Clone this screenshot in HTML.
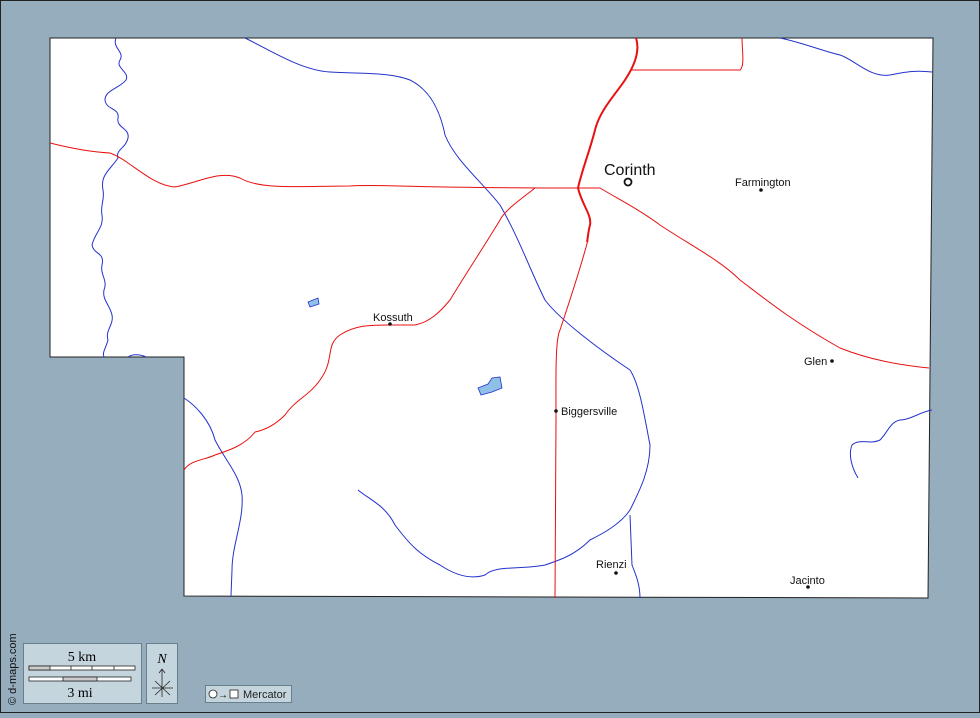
<!DOCTYPE html>
<html><head><style>
body{margin:0;width:980px;height:713px;overflow:hidden;background:#95adbd;font-family:"Liberation Sans",sans-serif}
</style></head><body>
<svg width="980" height="713" viewBox="0 0 980 713" xmlns="http://www.w3.org/2000/svg">
<rect x="0.5" y="0.5" width="979" height="712" fill="#95adbd" stroke="#222" stroke-width="1"/>
<polygon points="50,38 933,38 928,598 184,596 184,357 50,357" fill="#fff" stroke="#222" stroke-width="1"/>
<g fill="none" stroke="#2233cc" stroke-width="1">
<path d="M116,38 C112,48 125,52 120,60 C115,68 130,72 126,80 C120,88 105,90 105,100 C106,110 120,108 118,118 C116,128 130,128 128,138 C126,148 115,150 118,158 C110,170 100,175 103,190 C105,200 100,205 102,215 C104,228 95,232 92,245 C94,255 105,252 102,265 C100,275 108,280 104,290 C102,300 110,305 112,315 C114,325 105,330 108,340 C106,348 102,352 104,357"/>
<path d="M128,357 C132,354 140,354 146,357"/>
<path d="M245,38 C270,50 300,70 330,72 C360,74 390,72 410,80 C430,90 440,110 445,135 C455,160 480,180 500,205 C520,240 530,270 545,300 C560,320 600,350 630,370 C640,385 645,420 650,445 C650,470 640,490 630,510 C620,525 600,535 590,540 C575,555 560,560 545,565 C520,570 495,565 485,575 C470,580 455,575 440,565 C420,555 410,545 395,525 C385,505 370,500 358,490"/>
<path d="M630,515 L632,565 C636,575 640,585 640,598"/>
<path d="M184,398 C195,405 210,420 215,440 C225,460 240,475 242,495 C244,520 232,545 232,570 L231,596"/>
<path d="M780,38 C800,42 820,50 840,55 C855,60 870,78 890,75 C905,72 915,70 932,72"/>
<path d="M932,410 C920,412 910,420 900,420 C890,422 888,432 880,440 C870,445 860,438 852,445 C848,455 852,468 858,478"/>
</g>
<g fill="#8fc0e8" stroke="#2233cc" stroke-width="0.8">
<path d="M308,302 L318,298 L319,304 L310,307 Z"/>
<path d="M478,388 L488,384 L492,378 L500,377 L502,388 L492,392 L481,395 Z"/>
</g>
<g fill="none" stroke="#e81010" stroke-width="1">
<path d="M50,143 C70,148 90,152 110,153 C130,160 150,185 175,187 C200,182 220,170 240,178 C260,190 300,186 350,186 C380,184 400,188 580,188 L600,188 C620,200 640,210 660,225 C690,245 720,260 740,280 C760,295 790,320 840,348 C870,360 900,365 929,368"/>
<path d="M632,70 L740,70 C745,66 742,50 742,38"/>
<path d="M535,188 C520,200 505,210 500,220 C485,245 465,275 450,300 C440,312 430,322 415,325 L390,325 C370,325 355,325 340,335 C325,345 335,360 320,380 C310,395 295,400 285,415 C275,425 265,430 255,432 C245,445 230,450 215,455 C205,460 190,460 184,470"/>
<path d="M588,240 C580,270 570,300 560,330 C555,340 556,380 556,420 L555,598"/>
</g>
<path d="M636,38 C640,50 635,65 625,80 C615,95 600,110 595,130 C590,150 582,170 578,188 C582,205 592,215 590,225 C588,232 588,238 587,242" fill="none" stroke="#e81010" stroke-width="2"/>
<g font-size="11" fill="#111">
<circle cx="628" cy="182" r="3.5" fill="none" stroke="#111" stroke-width="1.8"/>
<text x="604" y="175" font-size="16">Corinth</text>
<circle cx="761" cy="190" r="1.8"/><text x="735" y="186">Farmington</text>
<circle cx="390" cy="324" r="1.8"/><text x="373" y="321">Kossuth</text>
<circle cx="832" cy="361" r="1.8"/><text x="804" y="365">Glen</text>
<circle cx="556" cy="411" r="1.8"/><text x="561" y="415">Biggersville</text>
<circle cx="616" cy="573" r="1.8"/><text x="596" y="568">Rienzi</text>
<circle cx="808" cy="587" r="1.8"/><text x="790" y="584">Jacinto</text>
</g>
<text transform="translate(16,705) rotate(-90)" font-size="11" fill="#111">© d-maps.com</text>
<rect x="23.5" y="643.5" width="118" height="60" fill="#c5d5de" stroke="#6a7f8c"/>
<text x="82" y="661" text-anchor="middle" font-family="Liberation Serif" font-size="14">5 km</text>
<rect x="29" y="666" width="106" height="4" fill="#fff" stroke="#222" stroke-width="0.8"/>
<rect x="29" y="666" width="21" height="4" fill="#ccc" stroke="#222" stroke-width="0.8"/>
<path d="M71,666v4M92,666v4M114,666v4" stroke="#222" stroke-width="0.8"/>
<rect x="29" y="677" width="102" height="4" fill="#fff" stroke="#222" stroke-width="0.8"/>
<rect x="63" y="677" width="34" height="4" fill="#ccc" stroke="#222" stroke-width="0.8"/>
<text x="80" y="697" text-anchor="middle" font-family="Liberation Serif" font-size="14">3 mi</text>
<rect x="146.5" y="643.5" width="31" height="60" fill="#c5d5de" stroke="#6a7f8c"/>
<text x="162" y="663" text-anchor="middle" font-family="Liberation Serif" font-style="italic" font-size="14">N</text>
<path d="M162,670V697M152,688H173M155,681L170,695M170,681L155,695M159,673L162,669L165,673" fill="none" stroke="#222" stroke-width="0.8"/>
<rect x="205.5" y="685.5" width="86" height="17" fill="#c5d5de" stroke="#6a7f8c"/>
<circle cx="213" cy="694" r="4" fill="#fff" stroke="#222" stroke-width="0.8"/>
<text x="218" y="698" font-size="10">→</text>
<rect x="230" y="690" width="8" height="8" fill="#fff" stroke="#222" stroke-width="0.8"/>
<text x="243" y="698" font-size="11" fill="#222">Mercator</text>
</svg>
</body></html>
